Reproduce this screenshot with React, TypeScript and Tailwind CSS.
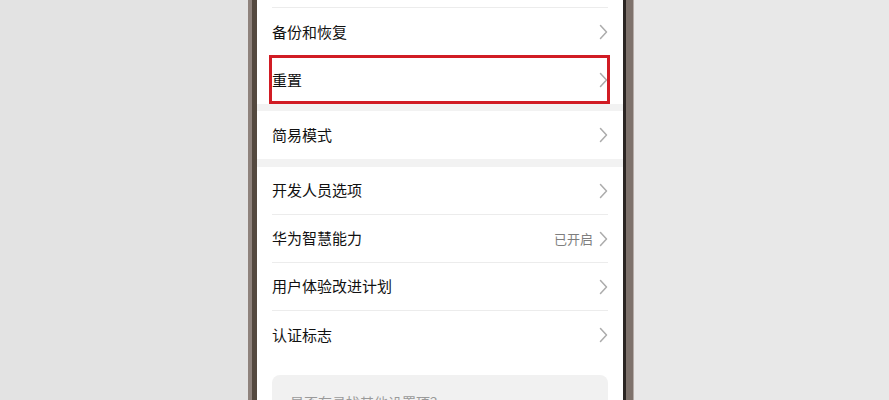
import type { ReactNode } from 'react'

function Chevron() {
  return (
    <svg width="9" height="16" viewBox="0 0 9 16" fill="none" className="shrink-0">
      <path d="M1.5 1.5 L7.5 8 L1.5 14.5" stroke="#acacac" strokeWidth="1.5" strokeLinecap="round" strokeLinejoin="round" />
    </svg>
  )
}

function Row({
  label,
  value,
  divider = true,
  children,
}: {
  label: string
  value?: string
  divider?: boolean
  children?: ReactNode
}) {
  return (
    <div className="relative px-[15px]">
      <div
        className={`flex h-[48px] items-center justify-between ${
          divider ? 'border-b border-[#ececec]' : ''
        }`}
      >
        <span className="text-[15px] text-[#111111]">{label}</span>
        <div className="flex items-center gap-[6px]">
          {value && <span className="text-[13px] text-[#7e7e7e]">{value}</span>}
          <Chevron />
        </div>
      </div>
      {children}
    </div>
  )
}

export default function App() {
  return (
    <div
      className="flex h-[400px] w-[889px] overflow-hidden"
      style={{ fontFamily: '"Noto Sans CJK SC", "Noto Sans", sans-serif' }}
    >
      <div className="w-[248px] bg-[#e3e3e3]" />
      {/* left frame */}
      <div className="flex w-[9px]">
        <div className="w-[4px] bg-[#8e827c]" />
        <div className="w-[5px] bg-[#54493f]" />
      </div>
      {/* screen */}
      <div className="w-[366px] bg-white">
        <div className="px-[15px]">
          <div className="h-[8px] border-b border-[#ececec]" />
        </div>
        <Row label="备份和恢复" divider={false} />
        <Row label="重置" divider={false}>
          <div className="absolute left-[12px] right-[13px] top-[-1px] bottom-[0px] border-[3px] border-[#d11c24]" />
        </Row>
        <div className="h-[7px] bg-[#f2f2f2]" />
        <Row label="简易模式" divider={false} />
        <div className="h-[8px] bg-[#f2f2f2]" />
        <Row label="开发人员选项" />
        <Row label="华为智慧能力" value="已开启" />
        <Row label="用户体验改进计划" />
        <Row label="认证标志" divider={false} />
        <div className="h-[16px]" />
        <div className="mx-[15px] rounded-[8px] bg-[#f1f1f1] px-[18px] pt-[14px] pb-[20px]">
          <span className="text-[14px] text-[#9a9a9a]">是否在寻找其他设置项？</span>
        </div>
      </div>
      {/* right frame */}
      <div className="flex w-[11px]">
        <div className="w-[3px] bg-[#2b2523]" />
        <div className="w-[7px] bg-[#7e726c]" />
        <div className="w-[1px] bg-[#b5aca8]" />
      </div>
      <div className="flex-1 bg-[#e8e8e8]" />
    </div>
  )
}
